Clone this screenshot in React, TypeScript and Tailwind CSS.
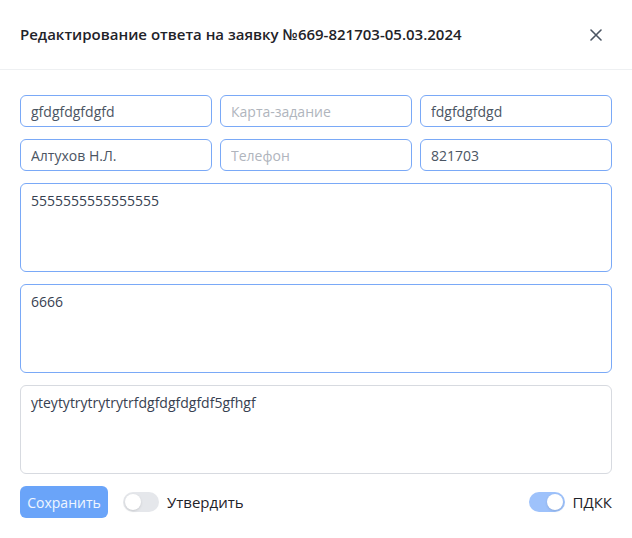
import React from "react";

const font = { fontFamily: '"Open Sans", "Noto Sans", sans-serif' };

function Field({ value, placeholder }: { value?: string; placeholder?: string }) {
  return (
    <input
      readOnly
      value={value ?? ""}
      placeholder={placeholder}
      className="h-[32px] w-full rounded-md border border-[#7aa9f7] bg-white px-[10px] text-[14px] text-[#4b5563] placeholder:text-[#b0b5bd] outline-none"
      style={font}
    />
  );
}

function Area({ value, blue = true }: { value: string; blue?: boolean }) {
  return (
    <textarea
      readOnly
      value={value}
      className={`h-[89px] w-full resize-none rounded-md border bg-white px-[10px] py-[6px] text-[14px] text-[#374151] outline-none ${
        blue ? "border-[#7aa9f7]" : "border-[#d7dae0]"
      }`}
      style={font}
    />
  );
}

function Toggle({ on }: { on: boolean }) {
  return (
    <div
      className={`flex h-[20px] w-[36px] items-center rounded-full px-[2px] ${
        on ? "justify-end bg-[#9ec2fb]" : "justify-start bg-[#e5e7eb]"
      }`}
    >
      <div className="h-[16px] w-[16px] rounded-full bg-white shadow-sm" />
    </div>
  );
}

export default function App() {
  return (
    <div className="h-[538px] w-[632px] bg-white" style={font}>
      <div className="flex h-[70px] items-center justify-between border-b border-[#eef0f2] px-5">
        <h2 className="text-[15px] font-semibold text-[#1f2329]">
          Редактирование ответа на заявку №669-821703-05.03.2024
        </h2>
        <svg width="12" height="12" viewBox="0 0 12 12" className="mr-[10px] text-[#4b5563]">
          <path d="M1 1L11 11M11 1L1 11" stroke="currentColor" strokeWidth="1.6" strokeLinecap="round" />
        </svg>
      </div>
      <div className="flex flex-col px-5 pt-[25px]">
        <div className="grid grid-cols-3 gap-x-2 gap-y-3">
          <Field value="gfdgfdgfdgfd" />
          <Field placeholder="Карта-задание" />
          <Field value="fdgfdgfdgd" />
          <Field value="Алтухов Н.Л." />
          <Field placeholder="Телефон" />
          <Field value="821703" />
        </div>
        <div className="mt-3 flex flex-col gap-3">
          <Area value="5555555555555555" />
          <Area value="6666" />
          <Area value="yteytytrytrytrytrfdgfdgfdgfdf5gfhgf" blue={false} />
        </div>
        <div className="mt-3 flex items-center justify-between">
          <div className="flex items-center">
            <button className="h-[32px] w-[88px] rounded-md bg-[#6aa4f9] text-[14px] text-white/90">
              Сохранить
            </button>
            <div className="ml-[15px] flex items-center gap-2">
              <Toggle on={false} />
              <span className="text-[15px] text-[#1f2329]">Утвердить</span>
            </div>
          </div>
          <div className="flex items-center gap-2">
            <Toggle on />
            <span className="text-[15px] text-[#1f2329]">ПДКК</span>
          </div>
        </div>
      </div>
    </div>
  );
}
